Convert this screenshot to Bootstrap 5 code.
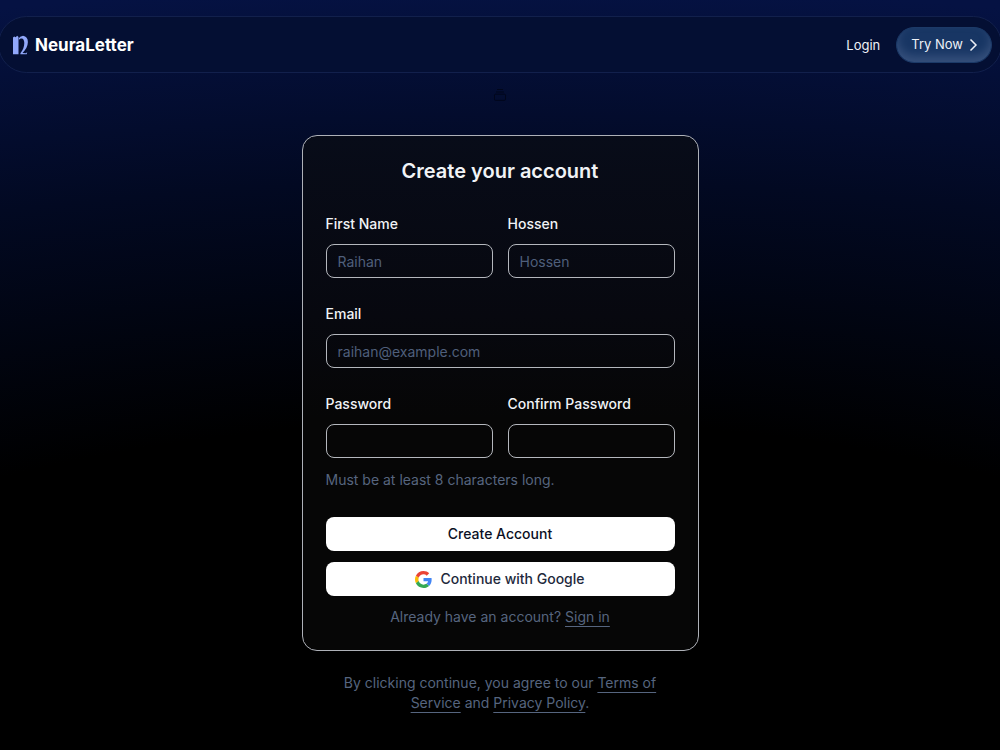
<!DOCTYPE html>
<html lang="en">
<head>
<meta charset="utf-8">
<meta name="viewport" content="width=device-width, initial-scale=1">
<title>NeuraLetter – Create your account</title>
<link href="https://cdn.jsdelivr.net/npm/bootstrap@5.3.0/dist/css/bootstrap.min.css" rel="stylesheet">
<style>
  body {
    min-height: 100vh;
    font-family: Inter, "Open Sans", sans-serif;
    font-size: 14px;
    line-height: 20px;
    color: #f1f3f6;
    background: #000 radial-gradient(200% 100% at 50% 100%, #000 44%, #020922 76%, #051243 102%) no-repeat fixed;
  }
  .site-bar {
    height: 57px;
    margin: 16px -2px 0;
    padding: 0 9px 0 14px;
    border: 1px solid #12204c;
    border-radius: 29px;
    background: #040f33;
  }
  .brand-link { gap: 7px; }
  .brand-name { font-size: 17px; font-weight: 700; color: #fff; }
  .site-link { font-size: 13px; color: #eef1f7; text-decoration: none; }
  .try-btn {
    --bs-btn-color: #eef1f7;
    --bs-btn-hover-color: #fff;
    height: 36px;
    padding: 0 12px 0 14px;
    border: 1px solid #1c3a68;
    font-size: 13px;
    background: #183664;
    box-shadow: inset 0 -6px 10px #36507c;
  }
  .stack-mark { margin-top: 15px; color: #01061b; }
  .signup { width: 397px; max-width: 100%; }
  .signup-card {
    margin-top: 33px;
    padding: 22px 23px 23px;
    border: 1px solid #aeb1b8;
    border-radius: 15px;
    color: inherit;
    background: linear-gradient(#080c19, #07080f 35%, #060606 55%);
  }
  .signup-title { margin-bottom: 29px; font-size: 20px; line-height: 27px; font-weight: 600; }
  .form-grid { display: grid; grid-template-columns: 1fr 1fr; gap: 26px 15px; }
  .wide-field { grid-column: 1 / -1; }
  .form-grid label { display: block; margin-bottom: 10px; font-weight: 500; }
  .form-grid .form-control {
    height: 34px;
    padding: 0 11px;
    border: 1px solid #b4b7bd;
    border-radius: 8px;
    font-size: 14px;
    color: #f1f3f6;
    background: transparent;
  }
  .form-grid .form-control::placeholder { color: #4f5f7b; opacity: 1; }
  .quiet { color: #56657f; }
  .quiet a { color: inherit; text-decoration: underline; text-underline-offset: 4px; text-decoration-skip-ink: none; }
  .hint { margin: 12px 0 27px; }
  .wide-btn {
    --bs-btn-color: #0b1024;
    --bs-btn-line-height: 20px;
    height: 34px;
    padding: 0;
    border-radius: 8px;
    font-size: 14px;
    font-weight: 500;
    background: #fff;
  }
  .google-btn { --bs-btn-color: #1e293b; margin: 11px 0; }
  .legal { max-width: 340px; margin: 22px auto 36px; }
</style>
</head>
<body>
<div class="overflow-hidden">
  <header class="site-bar d-flex align-items-center justify-content-between">
    <a href="#" class="brand-link d-flex align-items-center text-decoration-none">
      <svg width="15" height="20" viewBox="0 0 15 20" fill="#91a8fb" aria-hidden="true">
        <path d="M0 2.6 1.2 1.6 2.6 2.2 4.2.8 5.5 2v17.3H0z"/>
        <path d="M5.9 3.2C7 1.7 8.4 1.4 10 .8c3.2.6 4.9 2.6 4.9 6.2 0 4.4-2.3 7.6-5.4 11.1l3.4.2 1.3-1-.5 2H7.4v-1c2.7-3.2 3.9-6.9 3.9-10.3 0-2.8-1-4.6-2.7-4.6-1 0-1.7.5-2.7 1.4z"/>
      </svg>
      <span class="brand-name">NeuraLetter</span>
    </a>
    <nav class="d-flex align-items-center gap-3">
      <a href="#" class="site-link">Login</a>
      <button type="button" class="btn try-btn rounded-pill d-flex align-items-center">Try Now
        <svg class="ms-1" width="12" height="14" viewBox="0 0 12 14" fill="none" stroke="currentColor" stroke-width="1.5" aria-hidden="true"><path d="m3.5 1.5 5.5 5.5-5.5 5.5"/></svg>
      </button>
    </nav>
  </header>
</div>

<main class="signup mx-auto">
  <svg class="stack-mark d-block mx-auto" width="14" height="14" viewBox="0 0 14 14" fill="none" stroke="currentColor" stroke-width="1" aria-hidden="true"><path d="M4 1.5h6M3 4h8"/><rect x="1.5" y="6.2" width="11" height="6.2" rx="1"/></svg>

  <section class="card signup-card">
    <h1 class="signup-title text-center">Create your account</h1>
    <form>
      <div class="form-grid">
        <div><label for="first">First Name</label><input id="first" type="text" class="form-control" placeholder="Raihan"></div>
        <div><label for="last">Hossen</label><input id="last" type="text" class="form-control" placeholder="Hossen"></div>
        <div class="wide-field"><label for="email">Email</label><input id="email" type="email" class="form-control" placeholder="raihan@example.com"></div>
        <div><label for="pass">Password</label><input id="pass" type="password" class="form-control"></div>
        <div><label for="confirm">Confirm Password</label><input id="confirm" type="password" class="form-control"></div>
      </div>
      <p class="hint quiet">Must be at least 8 characters long.</p>
      <button type="submit" class="btn wide-btn w-100 d-block">Create Account</button>
      <button type="button" class="btn wide-btn google-btn w-100 d-flex align-items-center justify-content-center gap-2">
        <svg width="17" height="17" viewBox="0 0 48 48" aria-hidden="true"><path fill="#ea4335" d="M24 9.5c3.54 0 6.71 1.22 9.21 3.6l6.85-6.85C35.9 2.38 30.47 0 24 0 14.62 0 6.51 5.38 2.56 13.22l7.98 6.19C12.43 13.72 17.74 9.5 24 9.5z"/><path fill="#4285f4" d="M46.98 24.55c0-1.57-.15-3.09-.38-4.55H24v9.02h12.94c-.58 2.96-2.26 5.48-4.78 7.18l7.73 6c4.51-4.18 7.09-10.36 7.09-17.65z"/><path fill="#fbbc05" d="M10.53 28.59A14.5 14.5 0 0 1 9.77 24c0-1.6.27-3.14.76-4.59l-7.98-6.19A23.9 23.9 0 0 0 0 24c0 3.88.92 7.54 2.56 10.78z"/><path fill="#34a853" d="M24 48c6.48 0 11.93-2.13 15.89-5.81l-7.73-6c-2.15 1.45-4.92 2.3-8.16 2.3-6.26 0-11.57-4.22-13.47-9.91l-7.98 6.19C6.51 42.62 14.62 48 24 48z"/></svg>
        Continue with Google
      </button>
      <p class="quiet text-center mb-0">Already have an account? <a href="#">Sign in</a></p>
    </form>
  </section>

  <p class="legal quiet text-center">By clicking continue, you agree to our <a href="#">Terms of Service</a> and <a href="#">Privacy Policy</a>.</p>
</main>
<script src="https://cdn.jsdelivr.net/npm/bootstrap@5.3.0/dist/js/bootstrap.bundle.min.js"></script>
</body>
</html>
